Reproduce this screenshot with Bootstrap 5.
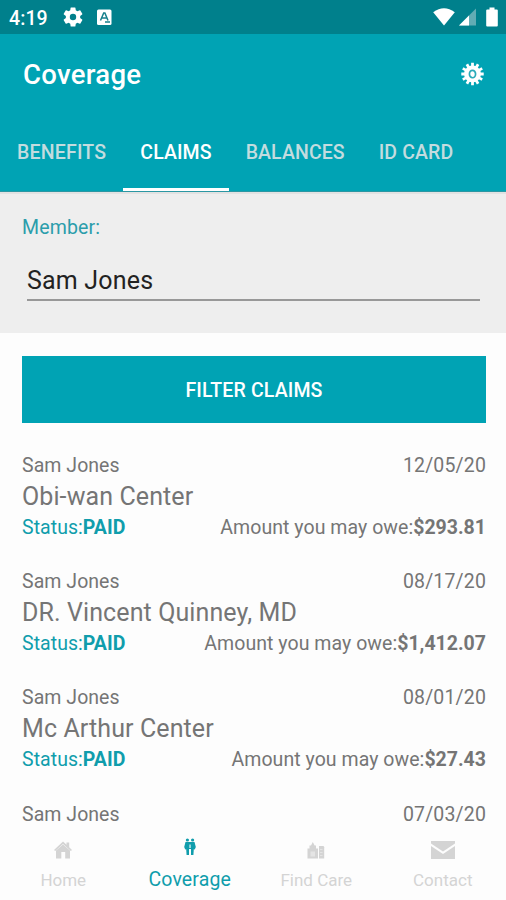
<!DOCTYPE html>
<html lang="en">
<head>
<meta charset="utf-8">
<meta name="viewport" content="width=device-width, initial-scale=1">
<title>Coverage</title>
<link href="https://cdn.jsdelivr.net/npm/bootstrap@5.3.0/dist/css/bootstrap.min.css" rel="stylesheet">
<style>
:root{--teal:#00a3b4}
body{font-family:Roboto,"Liberation Sans",sans-serif;background:#fdfdfd;width:506px;height:900px;overflow:hidden;color:#757575}
svg{display:block;flex:none}
.statusbar{height:34px;background:#00808c;padding:0 8px 0 9px;color:#fff}
.clock{font-size:19.5px;font-weight:500;letter-spacing:.1px;line-height:37px;height:34px;width:54px}
.app-a{margin-left:14px}
.battery{margin-left:10px}
.appbar{background:var(--teal);height:158px;border-bottom:1px solid #2b97a3}
.titlebar{height:80px;padding:0 22px 0 23px;color:#fff}
.titlebar h1{font-size:27.5px;font-weight:500;letter-spacing:.3px;line-height:32px;padding-top:2px}
.tabs .nav-link{height:77px;padding:0 17px;line-height:78px;color:#c3dcdf;font-size:19.5px;font-weight:500;letter-spacing:.1px;border-radius:0;white-space:nowrap}
.tabs .nav-link:first-child{letter-spacing:.2px}
.tabs .nav-link.active{color:#fff;box-shadow:inset 0 -3px #fff}
.member{background:#eee;height:141px;padding:22px 22px 0;border-top:2px solid #e2e2e2}
.member label{color:#2b9dab;font-size:19.5px;line-height:24px;letter-spacing:.15px}
.member .picker{margin:16px 4px 0 5px;border-bottom:2px solid #989898;height:45px;line-height:50px;font-size:25px;letter-spacing:.2px;color:#222}
.filter{margin:23px 20px 0 22px;height:67px;border-radius:0;background:var(--teal);color:#fff;font-size:19.5px;font-weight:500;letter-spacing:.15px;padding-top:8px}
.claims{padding:31px 20px 0 22px;height:414px;overflow:hidden}
.claim{height:116.2px;font-size:19.5px;line-height:24px;letter-spacing:.05px}
.claim .date{letter-spacing:.15px}
.claim h2{font-size:25px;font-weight:400;line-height:30px;margin:4px 0;letter-spacing:.1px}
.teal{color:#109dac}
.claim b{font-weight:700;letter-spacing:0}
.tabbar{height:64px;font-size:17px;color:#d4d4d4}
.tabbar a{width:126.5px;color:inherit;text-decoration:none}
.tabbar .glyph{height:20px;margin-top:4px}
.tabbar span{line-height:24px;margin-top:7px}
.tabbar .on{color:#109dac}
.tabbar .on .glyph{margin-top:1px}
.tabbar .on span{font-size:19.5px;margin-top:10px;letter-spacing:.15px}
</style>
</head>
<body class="d-flex flex-column">
<div class="statusbar d-flex align-items-center flex-shrink-0">
  <div class="clock">4:19</div>
  <svg width="20" height="20" viewBox="2 2 20 20" fill="#fff"><path d="M19.14 12.94a7 7 0 0 0 0-1.88l2.03-1.58a.5.5 0 0 0 .12-.61l-1.92-3.32a.5.5 0 0 0-.59-.22l-2.39.96a7 7 0 0 0-1.62-.94l-.36-2.54A.5.5 0 0 0 13.92 2.4h-3.84a.5.5 0 0 0-.47.41l-.36 2.54a7 7 0 0 0-1.62.94l-2.39-.96a.5.5 0 0 0-.59.22L2.74 8.87a.5.5 0 0 0 .12.61l2.03 1.58a7 7 0 0 0 0 1.88l-2.03 1.58a.5.5 0 0 0-.12.61l1.92 3.32c.12.22.37.29.59.22l2.39-.96c.5.38 1.03.7 1.62.94l.36 2.54c.05.24.24.41.48.41h3.84c.24 0 .44-.17.47-.41l.36-2.54a7 7 0 0 0 1.62-.94l2.39.96c.22.08.47 0 .59-.22l1.92-3.32a.5.5 0 0 0-.12-.61zM12 15.2a3.2 3.2 0 1 1 0-6.4 3.2 3.2 0 0 1 0 6.4z"/></svg>
  <svg class="app-a" width="15" height="17" viewBox="0 0 15 17"><rect y=".5" width="14.500" height="15.500" rx="1.500" fill="#fff"/><path d="M3.500 11.500 6.700 4h1.200L11 11.500M5 9h4.500M8 13h5" fill="none" stroke="#16808c" stroke-width="1.500"/></svg>
  <svg class="ms-auto" width="22" height="18" viewBox="0 0 22 18"><path d="M.2 4.300Q11-4 21.800 4.300L11 17.500z" fill="#fff"/></svg>
  <svg class="ms-1" width="17" height="18" viewBox="0 0 17 18"><path d="M0 17.500 17 .5v17z" fill="#62acb4"/><path d="M0 17.500 10 7.500v10z" fill="#fff"/></svg>
  <svg class="battery" width="12" height="20" viewBox="0 0 12 20"><path d="M1.200 2.500h2.300V.5h5v2h2.300q1 0 1 1v15q0 1-1 1H1.200q-1 0-1-1v-15q0-1 1-1z" fill="#fff"/></svg>
</div>
<header class="appbar flex-shrink-0">
  <div class="titlebar d-flex align-items-center justify-content-between">
    <h1 class="m-0">Coverage</h1>
    <svg width="23" height="24" viewBox="-12 -12 24 24"><circle r="8.800" fill="#fff"/><g stroke="#fff" stroke-width="2.900"><path d="M0-11.700V11.700M-11.700 0H11.700"/><path transform="rotate(30)" d="M0-11.700V11.700M-11.700 0H11.700"/><path transform="rotate(60)" d="M0-11.700V11.700M-11.700 0H11.700"/></g><ellipse rx="3.200" ry="3.900" fill="none" stroke="#2aabb9" stroke-width="1.800"/></svg>
  </div>
  <nav class="nav tabs flex-nowrap">
    <a class="nav-link" href="#">BENEFITS</a><a class="nav-link active" href="#">CLAIMS</a><a class="nav-link" href="#">BALANCES</a><a class="nav-link" href="#">ID CARD</a>
  </nav>
</header>
<section class="member flex-shrink-0">
  <label class="d-block">Member:</label>
  <div class="picker">Sam Jones</div>
</section>
<button class="btn filter flex-shrink-0">FILTER CLAIMS</button>
<main class="claims flex-shrink-0">
  <article class="claim"><div class="d-flex justify-content-between"><span>Sam Jones</span><span class="date">12/05/20</span></div><h2>Obi-wan Center</h2><div class="d-flex justify-content-between"><span class="teal">Status:<b>PAID</b></span><span>Amount you may owe:<b>$293.81</b></span></div></article>
  <article class="claim"><div class="d-flex justify-content-between"><span>Sam Jones</span><span class="date">08/17/20</span></div><h2>DR. Vincent Quinney, MD</h2><div class="d-flex justify-content-between"><span class="teal">Status:<b>PAID</b></span><span>Amount you may owe:<b>$1,412.07</b></span></div></article>
  <article class="claim"><div class="d-flex justify-content-between"><span>Sam Jones</span><span class="date">08/01/20</span></div><h2>Mc Arthur Center</h2><div class="d-flex justify-content-between"><span class="teal">Status:<b>PAID</b></span><span>Amount you may owe:<b>$27.43</b></span></div></article>
  <article class="claim"><div class="d-flex justify-content-between"><span>Sam Jones</span><span class="date">07/03/20</span></div></article>
</main>
<nav class="tabbar d-flex flex-shrink-0">
  <a href="#" class="d-flex flex-column align-items-center"><div class="glyph"><svg width="18" height="18" viewBox="0 0 18 18" fill="currentColor"><path d="M0 9 9 .5l3.500 3.200V1.500h2.700v4.800L18 9l-1.200 1L9 3 1.200 10z"/><path d="M2 9.500 9 3.500l7 6v8h-4.800V11H7.300v6.500H2z"/></svg></div><span>Home</span></a>
  <a href="#" class="on d-flex flex-column align-items-center"><div class="glyph"><svg width="12" height="18" viewBox="0 0 12 18" fill="currentColor"><circle cx="3.400" cy="2" r="1.600"/><circle cx="8.600" cy="2" r="1.600"/><path d="M1.500 4h9l1.300 5-1 2.500-1-.3-.4 5.800H7V11H5v6H2.600l-.4-5.800-1 .3L.2 9z"/><path d="M5.300 6.500h1.500V10H5.300z" fill="#bce6ea"/></svg></div><span>Coverage</span></a>
  <a href="#" class="d-flex flex-column align-items-center"><div class="glyph"><svg width="18" height="18" viewBox="0 0 18 18" fill="currentColor"><path d="M2.500 7.500V4.500h1.500L5.800 1l1.800 3.500H9v3h2v10H.5v-10z"/><path d="M12 5h4q1.200 0 1.200 1.200v11.300H12z"/><path d="M3.500 10.500H8v5H3.500zM13 8h2.500v1H13zm0 3h2.500v1H13zm0 3h2.500v1H13z" fill="#e4e4e4"/></svg></div><span>Find Care</span></a>
  <a href="#" class="d-flex flex-column align-items-center"><div class="glyph"><svg width="24" height="18" viewBox="0 0 24 18" fill="currentColor"><path d="M0 0h24v2.500L12 10.500 0 2.500zM0 5l12 8 12-8v13H0z"/></svg></div><span>Contact</span></a>
</nav>
<script src="https://cdn.jsdelivr.net/npm/bootstrap@5.3.0/dist/js/bootstrap.bundle.min.js"></script>
</body>
</html>
